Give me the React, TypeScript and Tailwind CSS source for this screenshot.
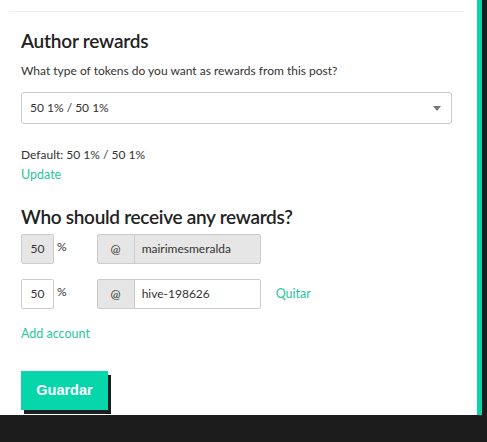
export default function App() {
  return (
    <div className="flex h-[442px] w-[487px] flex-col overflow-hidden bg-[#1c1c1c] font-['Lato',sans-serif] text-[#333]">
      <div className="flex h-[415px] shrink-0">
        <div className="w-[477px] bg-white pl-[9px] pr-[13px]">
          <div className="h-[12px] border-b border-[#eee]" />
          <div className="px-[12px]">
            <h2 className="mt-[17px] text-[19px] font-semibold leading-[24px] tracking-[-0.2px] text-[#222]">Author rewards</h2>
            <p className="mt-[10px] text-[12px] leading-[16px]">What type of tokens do you want as rewards from this post?</p>
            <div className="mt-[13px] flex h-[32px] w-[431px] items-center justify-between rounded-[3px] border border-[#ccc] bg-white pl-[8px] pr-[10px] text-[12px]">
              <span>50 1% / 50 1%</span>
              <svg width="8" height="5" viewBox="0 0 8 5">
                <path d="M0 0h8L4 5z" fill="#777" />
              </svg>
            </div>
            <p className="mt-[23px] text-[12px] leading-[16px]">Default: 50 1% / 50 1%</p>
            <a className="mt-[4px] block text-[12.5px] leading-[16px] text-[#2ac5a0]">Update</a>
            <h2 className="mt-[22px] text-[19px] font-semibold leading-[24px] tracking-[-0.3px] text-[#222]">Who should receive any rewards?</h2>
            <div className="mt-[5px] flex items-start">
              <div className="flex h-[30px] w-[33px] items-end justify-center rounded-[2px] border border-[#ccc] bg-[#e6e6e6] pb-[5px] text-[12px]">50</div>
              <span className="ml-[3px] mt-[4px] text-[12px]">%</span>
              <div className="ml-[30px] flex h-[30px] w-[164px] overflow-hidden rounded-[2px] border border-[#ccc] bg-[#e6e6e6] text-[12px]">
                <div className="flex w-[37px] items-center justify-center border-r border-[#ccc]">@</div>
                <div className="flex items-center pl-[7px]">mairimesmeralda</div>
              </div>
            </div>
            <div className="mt-[15px] flex items-start">
              <div className="flex h-[30px] w-[33px] items-end justify-center rounded-[2px] border border-[#ccc] bg-white pb-[5px] text-[12px]">50</div>
              <span className="ml-[3px] mt-[4px] text-[12px]">%</span>
              <div className="ml-[30px] flex h-[30px] w-[164px] overflow-hidden rounded-[2px] border border-[#ccc] bg-white text-[12px]">
                <div className="flex w-[37px] items-center justify-center border-r border-[#ccc] bg-[#e6e6e6]">@</div>
                <div className="flex items-center pl-[7px]">hive-198626</div>
              </div>
              <a className="ml-[15px] self-center text-[12.5px] text-[#2ac5a0]">Quitar</a>
            </div>
            <a className="mt-[17px] block text-[12.5px] leading-[16px] text-[#2ac5a0]">Add account</a>
            <button className="mt-[29px] h-[39px] w-[87px] bg-[#07d5aa] font-['Liberation_Sans',sans-serif] text-[14.5px] font-bold text-white shadow-[3px_4px_0_#1c1f22]">
              Guardar
            </button>
          </div>
        </div>
        <div className="w-[5px] bg-[#07d5aa]" />
        <div className="flex-1 bg-[#1c1c1c]" />
      </div>
    </div>
  );
}
